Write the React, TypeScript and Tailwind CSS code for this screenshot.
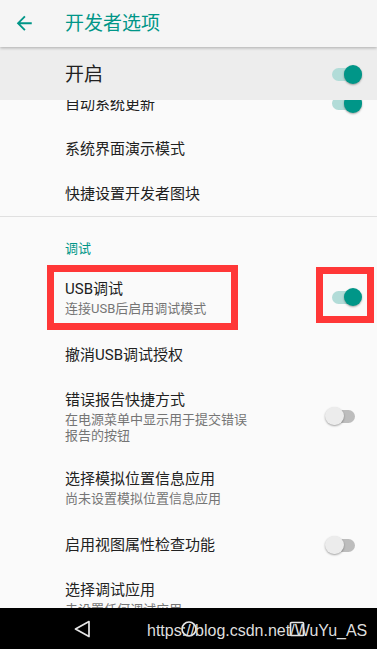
import React from 'react';

type Row = {
  title: string;
  sub?: string[];
  sw?: 'on' | 'off';
  cls: string;
};

// Переключатель в стиле Material (Android 8)
function Switch({ on }: { on: boolean }) {
  return (
    <div className="relative w-[37px] h-[20px] shrink-0">
      <div
        className={`absolute left-[7px] right-[7px] top-[3.5px] h-[13px] rounded-full ${
          on ? 'bg-[#b2dcd8]' : 'bg-[#bdbdbd]'
        }`}
      />
      <div
        className={`absolute top-[0.75px] w-[18.5px] h-[18.5px] rounded-full shadow-[0_1px_2px_rgba(0,0,0,0.35)] ${
          on ? 'right-0 bg-[#009688]' : 'left-0 bg-[#ececec]'
        }`}
      />
    </div>
  );
}

function Pref({ row }: { row: Row }) {
  return (
    <div className={`flex items-center justify-between pl-[65px] pr-[15px] ${row.cls}`}>
      <div className="flex flex-col">
        <div className="text-[15px] leading-[24px] text-[#212121]">{row.title}</div>
        {row.sub && (
          <div className="max-w-[190px] text-[13px] leading-[16px] text-[#757575]">
            {row.sub.map((s) => (
              <div key={s}>{s}</div>
            ))}
          </div>
        )}
      </div>
      {row.sw && <Switch on={row.sw === 'on'} />}
    </div>
  );
}

const topRows: Row[] = [
  { title: '自动系统更新', sw: 'on', cls: 'h-[45px]' },
  { title: '系统界面演示模式', cls: 'h-[45px]' },
  { title: '快捷设置开发者图块', cls: 'h-[45px]' },
];

const debugRows: Row[] = [
  { title: 'USB调试', sub: ['连接USB后启用调试模式'], sw: 'on', cls: 'h-[70px]' },
  { title: '撤消USB调试授权', cls: 'h-[45px]' },
  {
    title: '错误报告快捷方式',
    sub: ['在电源菜单中显示用于提交错误', '报告的按钮'],
    sw: 'off',
    cls: 'h-[78px]',
  },
  { title: '选择模拟位置信息应用', sub: ['尚未设置模拟位置信息应用'], cls: 'h-[64px]' },
  { title: '启用视图属性检查功能', sw: 'off', cls: 'h-[52px]' },
];

export default function App() {
  return (
    <div
      className="relative w-[377px] h-[649px] flex flex-col bg-[#fafafa] overflow-hidden"
      style={{ fontFamily: 'Roboto, "Noto Sans CJK SC", sans-serif' }}
    >
      {/* Верхняя панель */}
      <header className="relative z-10 h-[47px] shrink-0 flex items-center bg-[#f5f5f5] shadow-[0_1px_3px_rgba(0,0,0,0.28)]">
        <svg className="ml-[13px] w-[22.5px] h-[22.5px]" viewBox="0 0 24 24" fill="#009688">
          <path d="M20 11H7.83l5.59-5.59L12 4l-8 8 8 8 1.41-1.41L7.83 13H20v-2z" />
        </svg>
        <h1 className="ml-[29.5px] text-[19px] leading-none font-normal text-[#009688]">开发者选项</h1>
      </header>

      {/* Главный переключатель */}
      <div className="h-[53px] shrink-0 flex items-center justify-between pl-[65px] pr-[15px] pt-[2px] bg-[#ededed]">
        <span className="text-[19px] leading-none text-[#212121]">开启</span>
        <Switch on />
      </div>

      {/* Прокручиваемый список */}
      <div className="flex-1 overflow-hidden">
        <div className="-mt-[19px]">
          {topRows.map((r) => (
            <Pref key={r.title} row={r} />
          ))}
          <div className="h-px bg-[#e0e0e0]" />
          <div className="pl-[65px] pt-[24px] pb-[5px] text-[13px] leading-[16px] text-[#009688]">调试</div>
          {debugRows.map((r) => (
            <Pref key={r.title} row={r} />
          ))}
          <div className="pl-[65px] pt-[7px]">
            <div className="text-[15px] leading-[24px] text-[#212121]">选择调试应用</div>
            <div className="text-[13px] leading-[16px] text-[#757575]">未设置任何调试应用</div>
          </div>
        </div>
      </div>

      {/* Навигационная панель */}
      <nav className="relative h-[41px] shrink-0 flex items-center bg-black">
        <svg className="ml-[73px] w-[18px] h-[18px]" viewBox="0 0 18 18" fill="none" stroke="#e6e6e6" strokeWidth="1.7">
          <path d="M16 1.5 L2.5 9 L16 16.5 Z" strokeLinejoin="round" />
        </svg>
        <svg className="ml-[89px] w-[18px] h-[18px]" viewBox="0 0 18 18" fill="none" stroke="#e6e6e6" strokeWidth="1.7">
          <circle cx="9" cy="9" r="7" />
        </svg>
        <svg className="ml-[90px] w-[18px] h-[18px]" viewBox="0 0 18 18" fill="none" stroke="#e6e6e6" strokeWidth="1.7">
          <rect x="2.5" y="2.5" width="13" height="13" rx="1" />
        </svg>
        <span
          className="absolute left-[147px] top-[14.5px] text-[16px] leading-[16px] text-[#dedede]"
          style={{ fontFamily: '"Liberation Sans", Arial, sans-serif' }}
        >
          https://blog.csdn.net/WuYu_AS
        </span>
      </nav>

      {/* Красные рамки-пометки */}
      <div className="absolute left-[47px] top-[265px] w-[191px] h-[65px] border-[7px] border-[#ff3737]" />
      <div className="absolute left-[316px] top-[267px] w-[58px] h-[56px] border-[7px] border-[#ff3737]" />
    </div>
  );
}
